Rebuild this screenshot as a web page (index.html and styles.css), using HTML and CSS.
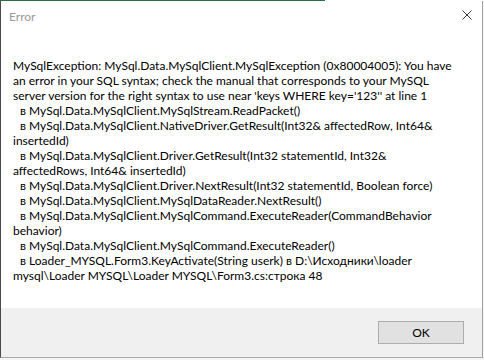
FILE: index.html
```html
<!DOCTYPE html>
<html>
<head>
<meta charset="utf-8">
<link rel="stylesheet" href="styles.css">
</head>
<body>
<div class="backdrop"><div class="app-strip"></div></div>
<div class="window">
  <div class="titlebar">
    <span class="title">Error</span>
    <svg class="close" width="10" height="10" viewBox="0 0 10 10"><path d="M0.5 0.5 L9.5 9.5 M9.5 0.5 L0.5 9.5" stroke="#3a3a3a" stroke-width="1" fill="none"/></svg>
  </div>
  <div class="message">
    <div class="ln">MySqlException: MySql.Data.MySqlClient.MySqlException (0x80004005): You have</div>
    <div class="ln">an error in your SQL syntax; check the manual that corresponds to your MySQL</div>
    <div class="ln">server version for the right syntax to use near 'keys WHERE key='123'' at line 1</div>
    <div class="ln st">в MySql.Data.MySqlClient.MySqlStream.ReadPacket()</div>
    <div class="ln st">в MySql.Data.MySqlClient.NativeDriver.GetResult(Int32&amp; affectedRow, Int64&amp;</div>
    <div class="ln">insertedId)</div>
    <div class="ln st">в MySql.Data.MySqlClient.Driver.GetResult(Int32 statementId, Int32&amp;</div>
    <div class="ln">affectedRows, Int64&amp; insertedId)</div>
    <div class="ln st">в MySql.Data.MySqlClient.Driver.NextResult(Int32 statementId, Boolean force)</div>
    <div class="ln st">в MySql.Data.MySqlClient.MySqlDataReader.NextResult()</div>
    <div class="ln st">в MySql.Data.MySqlClient.MySqlCommand.ExecuteReader(CommandBehavior</div>
    <div class="ln">behavior)</div>
    <div class="ln st">в MySql.Data.MySqlClient.MySqlCommand.ExecuteReader()</div>
    <div class="ln st">в Loader_MYSQL.Form3.KeyActivate(String userk) в D:\Исходники\loader</div>
    <div class="ln">mysql\Loader MYSQL\Loader MYSQL\Form3.cs:строка 48</div>
  </div>
  <div class="footer">
    <button class="ok">OK</button>
  </div>
</div>
</body>
</html>
```
FILE: styles.css
```css
html, body {
  margin: 0;
  padding: 0;
  background: #f4f4f4;
  width: 484px;
  height: 360px;
  overflow: hidden;
  font-family: "Lato", "Noto Sans", sans-serif;
}
.backdrop {
  height: 1px;
  background: #ffffff;
}
.app-strip {
  width: 325px;
  height: 1px;
  background: #217346;
}
.window {
  width: 481px;
  height: 356px;
  background: #ffffff;
  border-left: 1px solid #4a4a4a;
  border-right: 1px solid #a0a0a0;
  border-bottom: 1px solid #a8a8a8;
  display: flex;
  flex-direction: column;
}
.titlebar {
  height: 30px;
  display: flex;
  align-items: flex-start;
  justify-content: space-between;
  padding: 0 10px 0 8px;
}
.title {
  margin-top: 8px;
  font-size: 12px;
  line-height: 16px;
  color: #999999;
}
.close {
  margin-top: 9px;
}
.message {
  flex: 1;
  padding: 27px 0 0 12px;
  font-size: 12px;
  line-height: 15px;
  color: #000000;
}
.ln {
  white-space: pre;
}
.st {
  padding-left: 7px;
}
.footer {
  height: 49px;
  background: #f0f0f0;
  display: flex;
  justify-content: flex-end;
  align-items: flex-start;
  padding-right: 18px;
  box-sizing: border-box;
  padding-top: 13px;
}
.ok {
  width: 86px;
  height: 23px;
  background: #e1e1e1;
  border: 1px solid #adadad;
  font-family: "Lato", "Noto Sans", sans-serif;
  font-size: 12px;
  color: #000;
  padding: 0;
}
```
